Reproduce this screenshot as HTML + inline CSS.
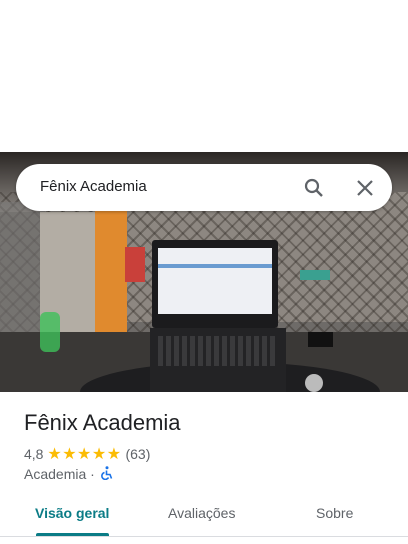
<!DOCTYPE html>
<html><head><meta charset="utf-8"><style>
*{margin:0;padding:0;box-sizing:border-box}
body{width:408px;height:544px;background:#fff;font-family:"Liberation Sans",Arial,sans-serif;position:relative;overflow:hidden}
.photo{position:absolute;left:0;top:152px;width:408px;height:240px;background:#6e6b68;overflow:hidden}
.a{position:absolute}
</style></head><body>
<div class="photo">
  <div class="a" style="left:0;top:0;width:408px;height:60px;background:linear-gradient(#2a2624,#8a8580)"></div>
  <div class="a" style="left:120px;top:40px;width:288px;height:130px;background:#8d8781"></div>
  <div class="a" style="left:0;top:40px;width:408px;height:140px;background:repeating-linear-gradient(45deg,transparent 0 8px,rgba(40,35,30,.35) 8px 10px),repeating-linear-gradient(-45deg,transparent 0 8px,rgba(40,35,30,.35) 8px 10px)"></div>
  <div class="a" style="left:0;top:50px;width:45px;height:130px;background:#7a7876;opacity:.6"></div>
  <div class="a" style="left:40px;top:60px;width:60px;height:170px;background:#b3ada4"></div>
  <div class="a" style="left:95px;top:50px;width:32px;height:200px;background:#e08a2e"></div>
  <div class="a" style="left:125px;top:95px;width:20px;height:35px;background:#c9403a"></div>
  <div class="a" style="left:300px;top:118px;width:30px;height:10px;background:#3aa090"></div>
  <div class="a" style="left:0;top:180px;width:408px;height:60px;background:#3a3836"></div>
  <div class="a" style="left:80px;top:210px;width:300px;height:60px;border-radius:50%;background:#1e1e20"></div>
  <div class="a" style="left:40px;top:160px;width:20px;height:40px;background:#3fbf5a;opacity:.8;border-radius:6px"></div>
  <div class="a" style="left:152px;top:88px;width:126px;height:88px;background:#1b1b1d;border-radius:3px"></div>
  <div class="a" style="left:158px;top:96px;width:114px;height:66px;background:#eef0f4"></div>
  <div class="a" style="left:158px;top:112px;width:114px;height:4px;background:#6a9bd0"></div>
  <div class="a" style="left:150px;top:176px;width:136px;height:70px;background:#232325"></div>
  <div class="a" style="left:158px;top:184px;width:118px;height:30px;background:repeating-linear-gradient(90deg,#3a3a3c 0 5px,#232325 5px 8px)"></div>
  <div class="a" style="left:305px;top:222px;width:18px;height:18px;border-radius:50%;background:#bbb"></div>
  <div class="a" style="left:308px;top:180px;width:25px;height:15px;background:#111"></div>
</div>
<div class="a" style="left:16px;top:164px;width:376px;height:47px;background:#fff;border-radius:24px;box-shadow:0 1px 3px rgba(0,0,0,.3)"></div>
<div class="a" style="left:40px;top:178px;font-size:15px;color:#202124">Fênix Academia</div>
<svg class="a" style="left:302px;top:176px" width="24" height="24" viewBox="0 0 24 24"><circle cx="10" cy="10" r="6" fill="none" stroke="#5f6368" stroke-width="2.2"/><path d="M14.5 14.5L20 20" stroke="#5f6368" stroke-width="2.4"/></svg>
<svg class="a" style="left:354px;top:177px" width="22" height="22" viewBox="0 0 22 22"><path d="M4 4L18 18M18 4L4 18" stroke="#5f6368" stroke-width="2.2"/></svg>
<div class="a" style="left:24px;top:410px;font-size:22px;color:#202124">Fênix Academia</div>
<div class="a" style="left:24px;top:444px;font-size:14px;color:#5f6368">4,8 <span style="color:#fbbc04;font-size:16px;letter-spacing:0.5px">★★★★★</span> (63)</div>
<div class="a" style="left:24px;top:466px;font-size:14px;color:#5f6368">Academia ·</div>
<svg class="a" style="left:100px;top:466px" width="13" height="14" viewBox="0 0 13 14"><circle cx="7" cy="1.8" r="1.5" fill="#1a73e8"/><path d="M6.5 4.5V8.5H10L11.5 12.5M4.5 6.5A3.5 3.5 0 1 0 8.5 11.5" fill="none" stroke="#1a73e8" stroke-width="1.6"/></svg>
<div class="a" style="left:35px;top:505px;font-size:14px;color:#0b7c86;font-weight:bold">Visão geral</div>
<div class="a" style="left:168px;top:505px;font-size:14px;color:#5f6368">Avaliações</div>
<div class="a" style="left:316px;top:505px;font-size:14px;color:#5f6368">Sobre</div>
<div class="a" style="left:36px;top:533px;width:73px;height:3px;background:#0b7c86;border-radius:2px 2px 0 0"></div>
<div class="a" style="left:0;top:536px;width:408px;height:1px;background:#dadce0"></div>
</body></html>
